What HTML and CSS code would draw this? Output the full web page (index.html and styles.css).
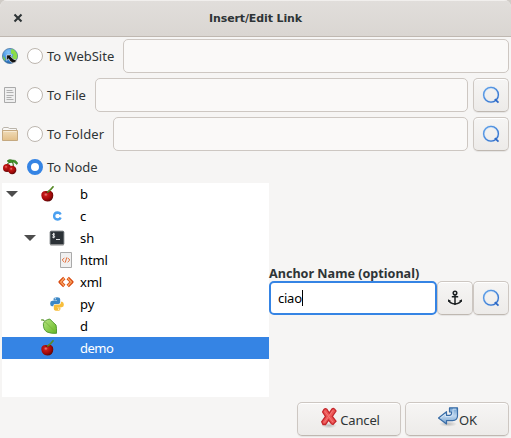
FILE: index.html
```html
<!DOCTYPE html>
<html lang="en">
<head>
<meta charset="utf-8">
<title>Insert/Edit Link</title>
<link rel="stylesheet" href="styles.css">
</head>
<body>
<svg class="defs" width="0" height="0">
  <defs>
    <radialGradient id="red" cx=".38" cy=".35" r=".65"><stop offset="0" stop-color="#ee8580"/><stop offset=".25" stop-color="#c41a17"/><stop offset=".7" stop-color="#a00808"/><stop offset="1" stop-color="#5d0909"/></radialGradient>
    <linearGradient id="ring" x1="0" y1="0" x2="1" y2="1"><stop offset="0" stop-color="#63a3ea"/><stop offset="1" stop-color="#2d69c6"/></linearGradient>
    <linearGradient id="leaf" x1="0" y1="0" x2="1" y2="1"><stop offset="0" stop-color="#b6e582"/><stop offset="1" stop-color="#65b822"/></linearGradient>
    <linearGradient id="tan" x1="0" y1="0" x2="0" y2="1"><stop offset="0" stop-color="#f0dcb9"/><stop offset="1" stop-color="#e3bf88"/></linearGradient>
    <linearGradient id="blue" x1="0" y1="0" x2="0" y2="1"><stop offset="0" stop-color="#6d9fd0"/><stop offset=".5" stop-color="#bed6ee"/><stop offset="1" stop-color="#709fcd"/></linearGradient>
    <radialGradient id="globe" cx=".4" cy=".25" r=".8"><stop offset="0" stop-color="#84c4f8"/><stop offset=".6" stop-color="#3d8de0"/><stop offset="1" stop-color="#1f5a9a"/></radialGradient>
    <radialGradient id="shade"><stop offset="0" stop-color="#777" stop-opacity=".45"/><stop offset="1" stop-color="#777" stop-opacity="0"/></radialGradient>
    <symbol id="cherry" viewBox="0 0 16 16"><path d="M.3 9.5Q0 4.4 6 5Q12.2 4 12.3 9.5Q12 15.5 6.3 15.6Q.9 15 .3 9.5Z" fill="url(#red)"/><path d="M4.3 6Q6.2 7.3 8.4 5.8" stroke="#6a1710" fill="none"/><path d="M6.3 6.4Q9.4 4.5 12.5.3" fill="none" stroke="#568a27" stroke-width="1.7"/></symbol>
    <symbol id="search" viewBox="0 0 18 18"><circle cx="9" cy="8.8" r="7.3" fill="none" stroke="#a8d2fb" stroke-width="2.3" opacity=".5"/><circle cx="9" cy="8.8" r="7.4" fill="none" stroke="url(#ring)" stroke-width="1.3"/><path d="M12.8 13.2L16.5 16.6" stroke="#2d69c6" stroke-width="1.8"/></symbol>
  </defs>
</svg>
<div class="dialog">
  <header class="titlebar">
    <svg class="close" viewBox="0 0 10 10"><path d="M1.5 1.5L8.5 8.5M8.5 1.5L1.5 8.5" stroke="#2e3436" stroke-width="2.1"/></svg>
    <h1>Insert/Edit Link</h1>
  </header>
  <main>
    <div class="row">
      <svg class="icon" viewBox="0 0 16 16"><circle cx="8" cy="8" r="7.6" fill="url(#globe)" stroke="#436f98" stroke-width=".7"/><path d="M8.8 1.5Q11 .8 13 2.8Q16 6 15.2 10L13 12.5L10 9.5L11.5 6.5L9 5.5Z" fill="#8bdc46"/><path d="M1 7.5L3.5 11L3 13Q.7 11 1 7.5Z" fill="#79cf44"/><path d="M4.6 7H10L8.6 8.6Q11.5 12 14.6 12.2Q14 15 10.7 14.9Q7.5 14 6.7 10.8L4.6 12.5Z" fill="#111" stroke="#fff" stroke-width=".6"/></svg>
      <span class="radio"></span><span class="label w1">To WebSite</span><div class="entry"></div>
    </div>
    <div class="row">
      <svg class="icon" viewBox="0 0 16 16"><path d="M2.5.5h11v15h-11z" fill="#efefef" stroke="#aaa"/><path d="M4.5 3.5h6M4.5 5.5h7M4.5 8.5h7M4.5 10.5h5M4.5 12.5h7" stroke="#b0b0b0"/></svg>
      <span class="radio"></span><span class="label w2">To File</span><div class="entry"></div><button class="btn sq"><svg><use href="#search"/></svg></button>
    </div>
    <div class="row">
      <svg class="icon" viewBox="0 0 16 16"><path d="M.5 5V2.5L2 1.5H6L7.5 2.5H14.5V5" fill="#f9f8f6" stroke="#bbb5ab"/><path d="M.5 4.5h15v10h-15z" fill="url(#tan)" stroke="#c5a980"/><path d="M1.5 5.5h13" stroke="#f7ead4"/></svg>
      <span class="radio"></span><span class="label w3">To Folder</span><div class="entry"></div><button class="btn sq"><svg><use href="#search"/></svg></button>
    </div>
    <div class="row node">
      <svg class="icon" viewBox="0 0 16 16"><path d="M4.5 6Q6 3.5 10 2.5Q12 5 11.5 9" fill="none" stroke="#427822" stroke-width="1.2"/><path d="M5 2Q7-.1 10.5 1Q14 .5 15.5 3.7Q16 5 14.6 5.5Q13 3.3 10.8 3Q8 4.6 5 2Z" fill="#409528" stroke="#286719" stroke-width=".5"/><circle cx="5" cy="9" r="4" fill="url(#red)"/><circle cx="10.2" cy="11" r="4.2" fill="url(#red)"/></svg>
      <span class="radio on"></span><span class="label">To Node</span>
    </div>
    <div class="columns">
      <ul class="tree">
        <li class="l1"><i class="arrow"></i><svg class="icon"><use href="#cherry"/></svg><span>b</span></li>
        <li class="l2"><i class="arrow none"></i><svg class="icon" viewBox="0 0 16 16"><path d="M11.6 9.5Q10.9 11.5 8.5 11.5Q5.1 11.3 5.1 8Q5.2 4.6 8.5 4.5Q10.9 4.5 11.6 6.5" fill="none" stroke="#4ba0f0" stroke-width="2.3"/></svg><span>c</span></li>
        <li class="l2"><i class="arrow"></i><svg class="icon" viewBox="0 0 16 16"><rect x="1.2" y="1.2" width="13.6" height="13.6" rx="1" fill="#2b3136" stroke="#5e6468"/><path d="M1 14.8h14" stroke="#999"/><path d="M6 4.2Q3.3 3.3 3.5 4.7Q3.8 5.5 5 5.7Q6.2 6.2 5.5 7.2Q4.6 7.7 3.2 7M4.7 2.8V8.3M7 9.5h4" fill="none" stroke="#f4f5f5" stroke-width=".9"/></svg><span>sh</span></li>
        <li class="l3"><i class="arrow none"></i><svg class="icon" viewBox="0 0 16 16"><path d="M2.5.5h11v15h-11z" fill="#f0f0f0" stroke="#aaa"/><path d="M6.4 5.8L4.2 8L6.4 10.2M9.6 5.8L11.8 8L9.6 10.2M8.7 5.5L7.3 10.5" fill="none" stroke="#e56b35" stroke-width="1"/></svg><span>html</span></li>
        <li class="l3"><i class="arrow none"></i><svg class="icon" viewBox="0 0 16 16"><g fill="none" stroke-linejoin="round"><path d="M6.3 4L2.2 8L6.3 12M9.7 4L13.8 8L9.7 12" stroke="#d94c13" stroke-width="3.4"/><path d="M6.2 4.3L2.7 8L6.2 11.7M9.8 4.3L13.3 8L9.8 11.7" stroke="#f9a765" stroke-width="1.3"/></g></svg><span>xml</span></li>
        <li class="l2"><i class="arrow none"></i><svg class="icon" viewBox="1 1 14 14"><path d="M5 5V3.5Q5 2 8 2Q10.8 2 10.8 3.8V6.5Q10.8 8 9.2 8H6.3Q4.8 8 4.7 10H3.5Q2 9.6 2 7.5Q2 5.2 3.8 5.2H8V4.8Z" fill="#3c87c5"/><path d="M11 11V12.3Q11 14 8.1 14Q5.2 14 5.2 12.2V10Q5.2 8.5 6.8 8.5H9.6Q11.4 8.5 11.5 6H12.5Q14 6.5 14 8.7Q14 10.8 12.2 10.8H8V11.1Z" fill="#f7bd3a"/><path d="M6 3.4h1M9 12.5h1" stroke="#fff"/></svg><span>py</span></li>
        <li class="l1"><i class="arrow none"></i><svg class="icon" viewBox="0 0 16 16"><path d="M0 2Q2.5 1.5 3.3 3" fill="none" stroke="#5d962e" stroke-width="1.2"/><path d="M2.4 5.5Q3.5 2 8.8 1Q12 4.3 15 7Q15.8 10 15.5 15.3Q10 15.8 6 14Q2 11.5 2.4 5.5Z" fill="url(#leaf)" stroke="#4c932b" stroke-width=".9"/><path d="M4 3.6L14.4 14" stroke="#77ae3e" stroke-width=".8"/></svg><span>d</span></li>
        <li class="l1 selected"><i class="arrow none"></i><svg class="icon"><use href="#cherry"/></svg><span>demo</span></li>
      </ul>
      <section class="anchor">
        <label>Anchor Name (optional)</label>
        <div class="anchor-row">
          <div class="entry focus"><span>ciao</span><i class="caret"></i></div>
          <button class="btn sq"><svg class="icon" viewBox="0 0 16 16"><g fill="none" stroke="#1c2022" stroke-width="1.5"><circle cx="8" cy="3" r="1.8"/><path d="M8 5V14M4.8 6.7H11.2M2 10.5Q3 13.7 8 13.9Q13 13.7 14 10.5"/></g><path d="M1 12V9.2L4.2 11ZM15 12V9.2L11.8 11ZM6.3 13.5L8 15.3L9.7 13.5Z" fill="#1c2022"/></svg></button>
          <button class="btn sq"><svg><use href="#search"/></svg></button>
        </div>
      </section>
    </div>
    <footer>
      <button class="btn action cancel"><svg viewBox="0 0 20 22"><ellipse cx="9" cy="18.5" rx="8" ry="2.8" fill="url(#shade)"/><path d="M4 2.5Q5.3 1 6.8 2.2L9.3 6L12 2Q13.5.6 14.8 2.4L16 4L12.3 9.5L16 14.3L13 17.5L11.5 16.8L8.6 13.1L5.5 17.5H3L1.7 14.8L5.5 9.5L2.6 5Z" fill="#ed5555" stroke="#c4272c" stroke-width="1.3"/><path d="M4.5 3.8L13 15.2M13 3.3L4.2 15.6" stroke="#f27c79"/></svg><span>Cancel</span></button>
      <button class="btn action ok"><svg viewBox="0 0 22 22"><ellipse cx="11" cy="18" rx="9" ry="2.8" fill="url(#shade)"/><path d="M1.5 12L9.5 5.7V9.3H12.7Q14.5 9.1 14.5 7.5V6H12.5V1.8H20.5V10Q20.3 14.5 15.5 14.7H9.5V18Z" fill="url(#blue)" stroke="#396ca6" stroke-width="1.2" stroke-linejoin="round"/><path d="M3.5 12L8.4 8V10.5H13.5Q16 10 16 7V3.2H19" fill="none" stroke="#d8e8f7" stroke-width=".8"/></svg><span>OK</span></button>
    </footer>
  </main>
</div>
</body>
</html>
```

FILE: styles.css
```css
* { box-sizing: border-box; }
body { margin: 0; background: #d0ccc7; color: #2e3436; font: 13px/22px "Noto Sans", sans-serif; }
.defs { position: absolute; }
svg { display: block; }
.dialog { width: 511px; height: 438px; overflow: hidden; background: #f6f5f4; border-radius: 7px 7px 0 0; }
.titlebar { display: grid; grid-template-columns: 36px 1fr 36px; align-items: center; height: 37px; border-bottom: 1px solid #bfb8b1; background: linear-gradient(#e1dedb, #dad6d2); box-shadow: inset 0 1px #f1efed; }
.close { width: 10px; height: 10px; margin-left: 13px; }
h1 { margin: 2px 0 0; text-align: center; font: bold 11px/20px "DejaVu Sans", sans-serif; letter-spacing: -.12px; }
main { padding: 2px 2px 0; }
.row { display: flex; align-items: center; height: 34px; margin-bottom: 5px; }
.row.node { height: 22px; }
.icon { width: 16px; height: 16px; flex: none; }
.radio { width: 16px; height: 16px; flex: none; margin: 0 4px 0 9px; border: 1px solid #bdb6af; border-radius: 50%; background: #fff; }
.radio.on { border: 4.5px solid #3584e4; }
.label { flex: none; white-space: nowrap; }
.w1 { width: 76px; }
.w2 { width: 48px; letter-spacing: .1px; }
.w3 { width: 66px; letter-spacing: .1px; }
.entry { flex: 1; height: 34px; border: 1px solid #cdc7c2; border-radius: 5px; background: #faf9f8; }
.btn { display: flex; align-items: center; justify-content: center; height: 34px; padding: 0; border: 1px solid #cdc7c2; border-bottom-color: #bfb8b1; border-radius: 5px; background: linear-gradient(#f6f5f4, #edebe9); box-shadow: inset 0 1px #fff, 0 1px 1px #00000012; color: inherit; font: inherit; }
.sq { width: 36px; flex: none; }
.sq svg:not(.icon) { width: 18px; height: 18px; }
.row .sq { margin-left: 5px; }
.columns { display: flex; height: 214px; }
.tree { width: 267px; margin: 0; padding: 0; list-style: none; background: #fff; color: #000; }
.tree li { display: flex; align-items: center; height: 22px; }
.tree span { margin-left: auto; width: 189px; letter-spacing: -.1px; }
.tree .selected span { letter-spacing: -.5px; }
.arrow { width: 12px; height: 6px; flex: none; background: #4d4d4d; clip-path: polygon(0 0, 100% 0, 50% 100%); margin-right: 23px; }
.none { visibility: hidden; }
.l1 { padding-left: 4px; }
.l2 { padding-left: 22px; }
.l2 .arrow { margin-right: 13px; }
.l3 { padding-left: 40px; }
.l3 .arrow { margin-right: 4px; }
.tree .selected { background: #3584e4; color: #fff; }
.anchor { flex: 1; display: flex; flex-direction: column; padding-top: 83px; }
.anchor label { height: 15px; font-weight: bold; line-height: 16px; white-space: nowrap; font-size: 12.6px; }
.anchor-row { display: flex; }
.anchor .focus { display: flex; align-items: center; padding-left: 7px; border: 2px solid #3584e4; background: #fff; color: #000; letter-spacing: -.25px; }
.caret { width: 1px; height: 16px; background: #000; }
footer { display: flex; justify-content: flex-end; gap: 4px; margin-top: 5px; }
.action { width: 104px; }
.action span { margin-top: 2px; letter-spacing: -.15px; }
.cancel svg { width: 20px; height: 22px; margin: -2px 0 0 2px; }
.ok svg { width: 22px; height: 22px; margin: -4px 0 0; }
```
